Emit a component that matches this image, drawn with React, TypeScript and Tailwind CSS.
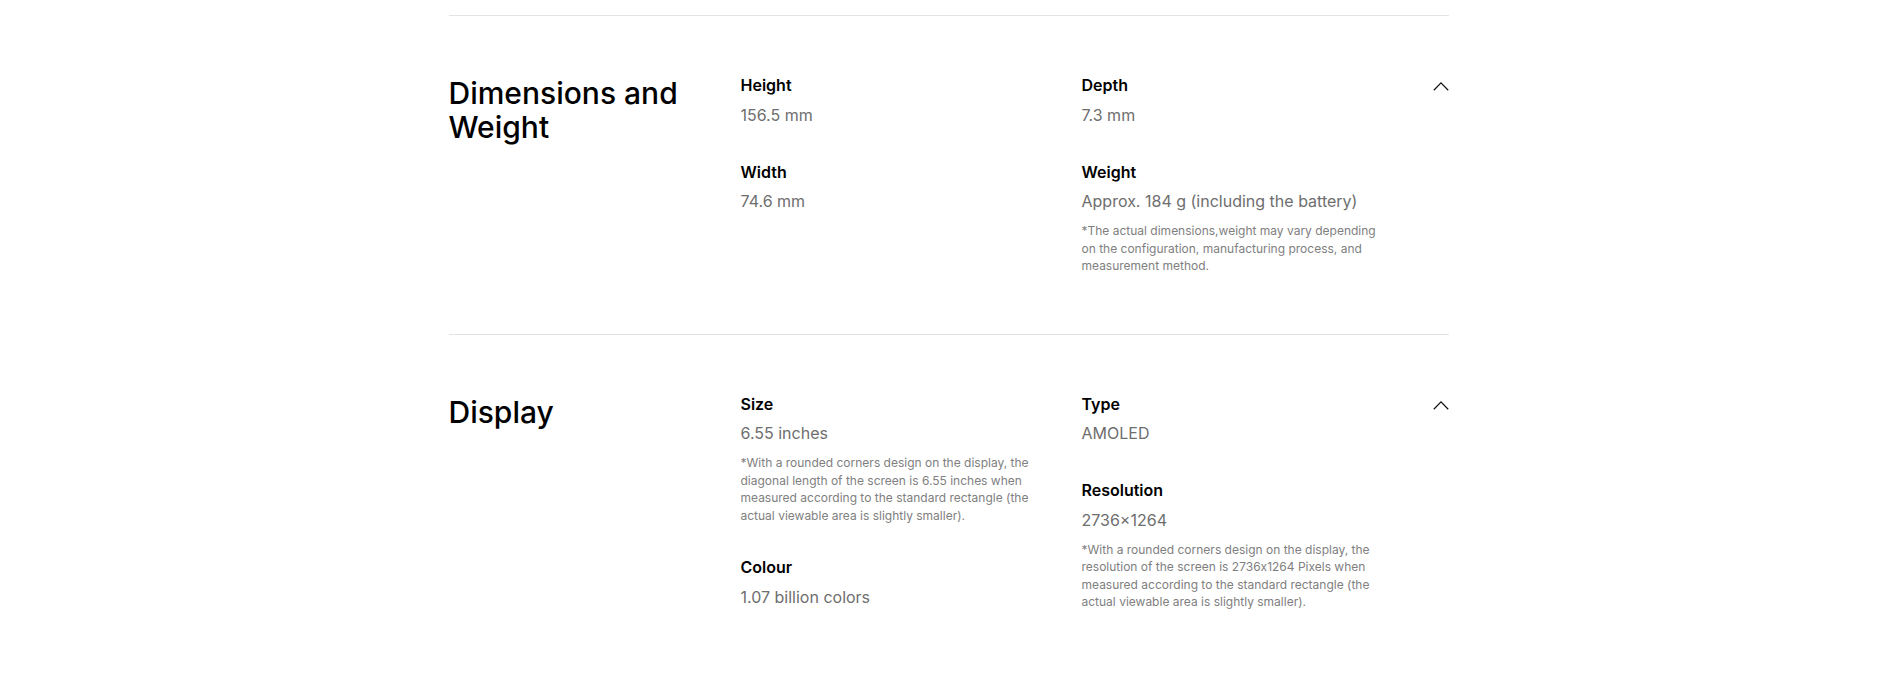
import React from 'react';

interface Spec {
  label: string;
  value: string;
  note?: string;
}

interface Section {
  title: string;
  left: Spec[];
  right: Spec[];
}

const SECTIONS: Section[] = [
  {
    title: 'Dimensions and Weight',
    left: [
      { label: 'Height', value: '156.5 mm' },
      { label: 'Width', value: '74.6 mm' },
    ],
    right: [
      { label: 'Depth', value: '7.3 mm' },
      {
        label: 'Weight',
        value: 'Approx. 184 g (including the battery)',
        note: '*The actual dimensions,weight may vary depending on the configuration, manufacturing process, and measurement method.',
      },
    ],
  },
  {
    title: 'Display',
    left: [
      {
        label: 'Size',
        value: '6.55 inches',
        note: '*With a rounded corners design on the display, the diagonal length of the screen is 6.55 inches when measured according to the standard rectangle (the actual viewable area is slightly smaller).',
      },
      { label: 'Colour', value: '1.07 billion colors' },
    ],
    right: [
      { label: 'Type', value: 'AMOLED' },
      {
        label: 'Resolution',
        value: '2736×1264',
        note: '*With a rounded corners design on the display, the resolution of the screen is 2736x1264 Pixels when measured according to the standard rectangle (the actual viewable area is slightly smaller).',
      },
    ],
  },
];

const SpecItem: React.FC<{ spec: Spec }> = ({ spec }) => (
  <div>
    <div className="text-[16px] leading-[24px] font-semibold text-[#000]">{spec.label}</div>
    <div className="mt-[3.5px] text-[16px] leading-[28px] text-[#6e6e6e]">{spec.value}</div>
    {spec.note && (
      // calt off so "2736x1264" keeps its plain x
      <p className="mt-[7px] w-[300px] text-[12px] leading-[17.5px] text-[#808080] [font-feature-settings:'calt'_0]">
        {spec.note}
      </p>
    )}
  </div>
);

const ChevronUp = () => (
  <svg width="16" height="10" viewBox="0 0 16 10" fill="none" className="mt-[8px]">
    <polyline points="0.8,9.2 8,1.8 15.2,9.2" stroke="#111" strokeWidth="1.25" />
  </svg>
);

const SpecSection: React.FC<{ section: Section }> = ({ section }) => (
  <section className="border-t border-[#e3e3e3] pt-[57px] pb-[59px]">
    <div className="grid grid-cols-[292px_341px_1fr_16px] items-start">
      <h2 className="mt-[3px] w-[260px] text-[30px] leading-[34px] font-medium text-[#000]">
        {section.title}
      </h2>
      <div className="flex flex-col gap-[31px]">
        {section.left.map((s) => (
          <SpecItem key={s.label} spec={s} />
        ))}
      </div>
      <div className="flex flex-col gap-[31px]">
        {section.right.map((s) => (
          <SpecItem key={s.label} spec={s} />
        ))}
      </div>
      <ChevronUp />
    </div>
  </section>
);

export default function App() {
  return (
    <div className="min-h-screen bg-white pt-[15px]" style={{ fontFamily: 'Inter, "Noto Sans", sans-serif' }}>
      <div className="mx-auto w-[1000px]">
        {SECTIONS.map((s) => (
          <SpecSection key={s.title} section={s} />
        ))}
      </div>
    </div>
  );
}
